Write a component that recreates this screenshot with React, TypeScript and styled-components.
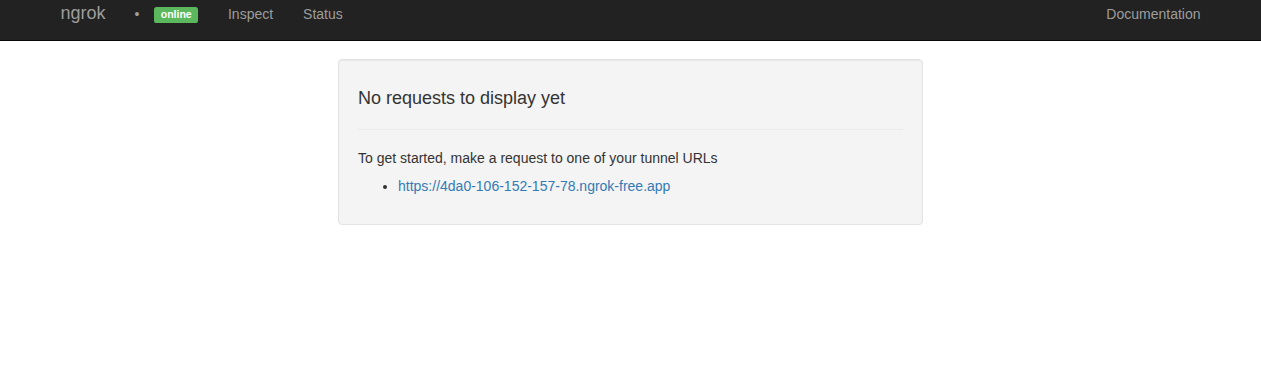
import styled, { createGlobalStyle } from "styled-components";

const GlobalStyle = createGlobalStyle`
  body {
    margin: 0;
    background: #fff;
    font-family: "Liberation Sans", Arial, Helvetica, sans-serif;
    font-size: 14px;
    line-height: 1.42857;
    color: #333;
  }
`;

const Navbar = styled.nav`
  background: #222;
  border-bottom: 1px solid #080808;
  height: 40px;
  margin-bottom: 18px;
`;

const Container = styled.div`
  width: 1170px;
  margin: 0 auto;
  padding: 0 15px;
  box-sizing: border-box;
`;

const NavInner = styled(Container)`
  display: flex;
  align-items: flex-start;
  height: 100%;
`;

const Brand = styled.a`
  margin-left: -15px;
  padding: 3px 15px 0;
  font-size: 18px;
  line-height: 20px;
  color: #9d9d9d;
  text-decoration: none;
`;

const NavList = styled.ul<{ $right?: boolean }>`
  display: flex;
  list-style: none;
  margin: 0;
  margin-left: ${(p) => (p.$right ? "auto" : "-1px")};
  margin-right: ${(p) => (p.$right ? "-15px" : "0")};
  padding: 0;
`;

const NavItem = styled.li<{ $tight?: boolean }>`
  padding: 4px 15px 0;
  padding-left: ${(p) => (p.$tight ? "0" : "15px")};
  line-height: 20px;
  color: #9d9d9d;
  font-size: 14px;
`;

const NavLink = styled.a`
  color: #9d9d9d;
  text-decoration: none;
`;

const Label = styled.span`
  display: inline-block;
  padding: 0.2em 0.6em 0.3em;
  font-size: 10.5px;
  font-weight: bold;
  line-height: 1;
  color: #fff;
  background: #5cb85c;
  border-radius: 0.25em;
  vertical-align: 1px;
`;

const Well = styled.div`
  width: 50%;
  margin-left: 25%;
  box-sizing: border-box;
  padding: 19px;
  background: #f4f4f4;
  border: 1px solid #e3e3e3;
  border-radius: 4px;
  box-shadow: inset 0 1px 1px rgba(0, 0, 0, 0.05);
`;

const Heading = styled.h4`
  margin: 10px 0;
  font-size: 18px;
  font-weight: 500;
  line-height: 1.1;
  color: #333;
`;

const Rule = styled.hr`
  margin: 20px 0 19px;
  border: 0;
  border-top: 1px solid #eaeaea;
`;

const Text = styled.p`
  margin: 0 0 10px;
  line-height: 18px;
`;

const Tunnels = styled.ul`
  margin: 0 0 10px;
  padding-left: 40px;
  line-height: 18px;
`;

const TunnelLink = styled.a`
  color: #337ab7;
  text-decoration: none;
`;

export default function App() {
  return (
    <>
      <GlobalStyle />
      <Navbar>
        <NavInner>
          <Brand href="#">ngrok</Brand>
          <NavList>
            <NavItem>•</NavItem>
            <NavItem $tight>
              <Label>online</Label>
            </NavItem>
            <NavItem>
              <NavLink href="#">Inspect</NavLink>
            </NavItem>
            <NavItem>
              <NavLink href="#">Status</NavLink>
            </NavItem>
          </NavList>
          <NavList $right>
            <NavItem>
              <NavLink href="#">Documentation</NavLink>
            </NavItem>
          </NavList>
        </NavInner>
      </Navbar>
      <Container style={{ padding: 0 }}>
        <Well>
          <Heading>No requests to display yet</Heading>
          <Rule />
          <Text>To get started, make a request to one of your tunnel URLs</Text>
          <Tunnels>
            <li>
              <TunnelLink href="#">https://4da0-106-152-157-78.ngrok-free.app</TunnelLink>
            </li>
          </Tunnels>
        </Well>
      </Container>
    </>
  );
}
